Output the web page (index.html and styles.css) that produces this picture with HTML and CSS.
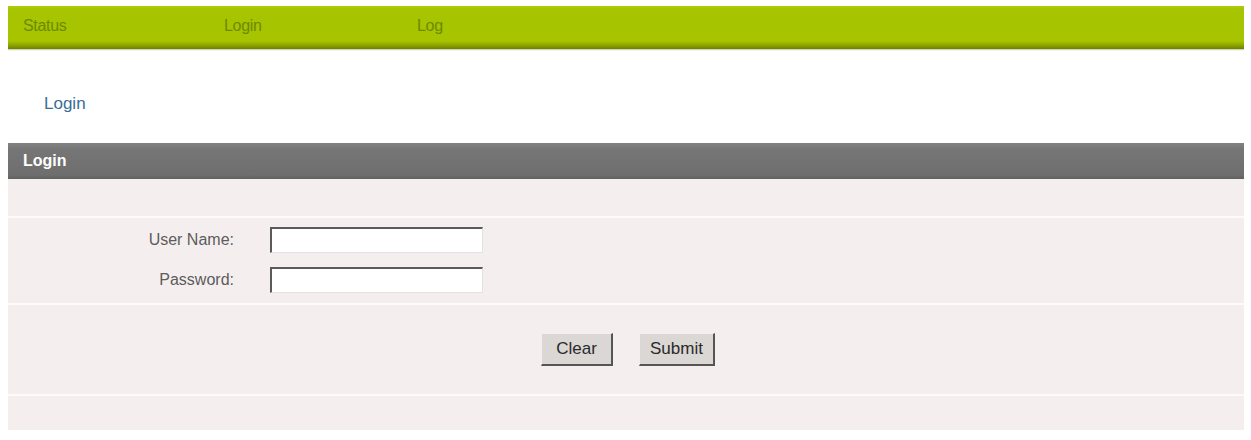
FILE: index.html
```html
<!DOCTYPE html>
<html lang="en">
<head>
<meta charset="utf-8">
<title>Login</title>
<link rel="stylesheet" href="styles.css">
</head>
<body>
  <nav class="topnav">
    <a class="topnav-item" href="#">Status</a>
    <a class="topnav-item" href="#">Login</a>
    <a class="topnav-item" href="#">Log</a>
  </nav>

  <div class="page-title">Login</div>

  <section class="panel">
    <h2 class="panel-head">Login</h2>
    <div class="panel-row row-spacer"></div>
    <form class="panel-row row-fields">
      <div class="field">
        <label class="field-label" for="user">User Name:</label>
        <input class="field-input" id="user" type="text">
      </div>
      <div class="field">
        <label class="field-label" for="pass">Password:</label>
        <input class="field-input" id="pass" type="password">
      </div>
    </form>
    <div class="panel-row row-actions">
      <button class="btn btn-clear" type="button">Clear</button>
      <button class="btn btn-submit" type="button">Submit</button>
    </div>
    <div class="panel-row row-foot"></div>
  </section>
</body>
</html>
```

FILE: styles.css
```css
html, body {
  background: #ffffff;
}

body {
  margin: 6px 7px 0 8px;
  font-family: "Liberation Sans", Arial, sans-serif;
}

/* top navigation strip */
.topnav {
  display: grid;
  grid-template-columns: 201px 193px auto;
  align-items: start;
  height: 43px;
  box-sizing: border-box;
  padding: 11px 0 0 15px;
  background: linear-gradient(to bottom, #b2cc10 0px, #a6c400 3px, #a6c400 35px, #8ea600 39px, #6f8000 43px);
  box-shadow: 0 1px 1px rgba(120, 130, 40, 0.35);
}

.topnav-item {
  color: #6e8a00;
  font-size: 16px;
  text-decoration: none;
  letter-spacing: -0.3px;
}

/* page heading */
.page-title {
  padding: 45px 0 0 36px;
  height: 49px;
  color: #3a6d98;
  font-size: 17px;
}

/* login panel */
.panel {
  width: 1236px;
  background: #f4efee;
}

.panel-head {
  margin: 0;
  height: 36px;
  box-sizing: border-box;
  padding: 9px 0 0 15px;
  color: #ffffff;
  font-size: 16px;
  font-weight: bold;
  background: linear-gradient(to bottom, #828282 0px, #767676 6px, #6e6e6e 32px, #606060 36px);
}

.panel-row {
  background: #f4efee;
  border-bottom: 2px solid #fdfbfa;
}

.row-spacer {
  height: 37px;
}

.row-fields {
  margin: 0;
  height: 87px;
  box-sizing: border-box;
  padding-top: 9px;
  display: flex;
  flex-direction: column;
  gap: 14px;
}

.field {
  display: flex;
  align-items: center;
}

.field-label {
  width: 262px;
  padding-right: 36px;
  box-sizing: border-box;
  text-align: right;
  color: #5c5c5c;
  font-size: 16px;
}

.field-input {
  width: 213px;
  height: 26px;
  box-sizing: border-box;
  margin: 0;
  padding: 2px 4px;
  background: #ffffff;
  border-style: solid;
  border-width: 2px 1px 1px 2px;
  border-color: #5a5a5a #e4e2e0 #e4e2e0 #5a5a5a;
  font: 15px "Liberation Sans", Arial, sans-serif;
}

.row-actions {
  height: 91px;
  box-sizing: border-box;
  display: flex;
  justify-content: center;
  align-items: flex-start;
  gap: 26px;
  padding: 28px 0 0 4px;
}

.btn {
  height: 33px;
  padding: 0;
  margin: 0;
  font: 17px "Liberation Sans", Arial, sans-serif;
  color: #2a2a2a;
  background: #dad7d4;
  border-style: solid;
  border-width: 1px 2px 2px 1px;
  border-color: #f2f0ee #555555 #555555 #f2f0ee;
}

.btn-clear {
  width: 72px;
}

.btn-submit {
  width: 76px;
}

.row-foot {
  height: 34px;
  border-bottom: 0;
}
```
